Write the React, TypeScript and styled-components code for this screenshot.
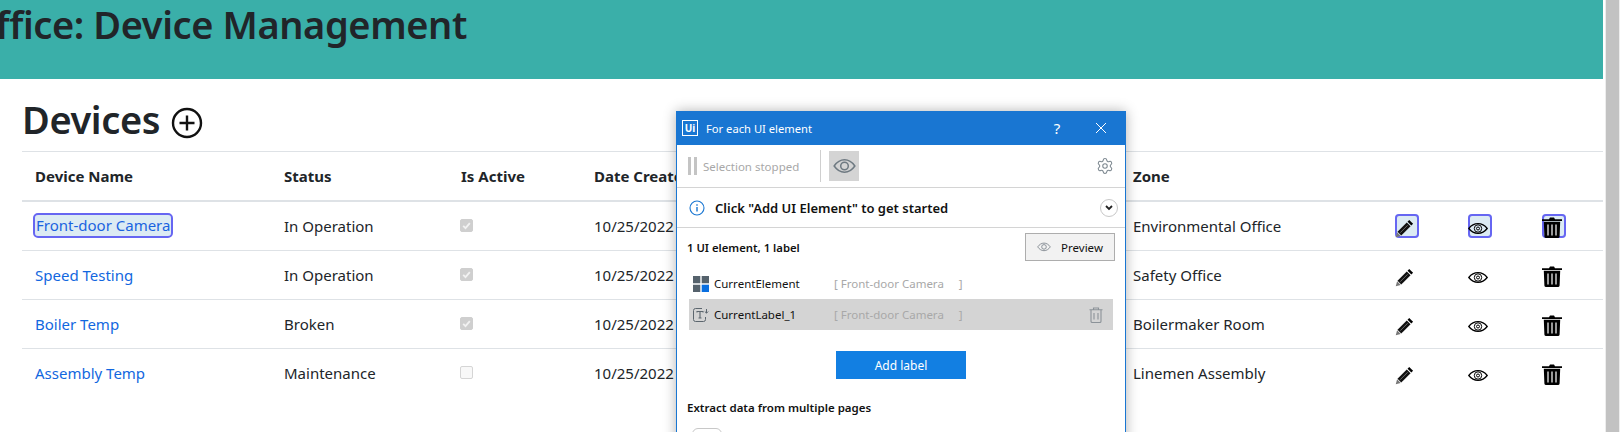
import React from "react"
import styled, { createGlobalStyle } from "styled-components"
import { Settings } from "lucide-react"

const GlobalStyle = createGlobalStyle`
  html, body {
    margin: 0;
    padding: 0;
    height: 432px;
    overflow: hidden;
    background: #fff;
    font-family: "Noto Sans", "Open Sans", sans-serif;
    color: #212529;
  }
`

type Device = {
  name: string
  status: string
  active: boolean
  zone: string
}

const devices: Device[] = [
  { name: "Front-door Camera", status: "In Operation", active: true, zone: "Environmental Office" },
  { name: "Speed Testing", status: "In Operation", active: true, zone: "Safety Office" },
  { name: "Boiler Temp", status: "Broken", active: true, zone: "Boilermaker Room" },
  { name: "Assembly Temp", status: "Maintenance", active: false, zone: "Linemen Assembly" },
]

const PencilIcon = () => (
  <svg width="19" height="19" viewBox="0 0 20 20">
    <path d="M15 1l4 4-1.800 1.800-4-4z" fill="#000" />
    <path d="M12.400 3.600l4 4-9.800 9.800-4-4z" fill="#111" />
    <path d="M13.300 6.600l-7.800 7.800" stroke="#888" strokeWidth="0.800" />
    <path d="M2.200 14l3.800 3.800L.8 19.300z" fill="#777" />
  </svg>
)

const EyeIcon = () => (
  <svg width="20" height="11" viewBox="0 0 20 11" fill="none" stroke="#000">
    <path d="M.8 5.500C3.300 2.300 6.300.7 10 .7s6.700 1.600 9.200 4.800C16.700 8.700 13.700 10.300 10 10.300S3.300 8.700.8 5.500z" strokeWidth="1.300" />
    <circle cx="10" cy="5.500" r="3.700" strokeWidth="1" />
    <circle cx="10" cy="5.500" r="1.500" strokeWidth="1" />
  </svg>
)

const TrashIcon = () => (
  <svg width="20" height="21" viewBox="0 0 20 21">
    <path d="M7 2.200L8 .4h4l1 1.800h7v1.800H0V2.200z" fill="#000" />
    <path d="M1.800 4.800h16.400l-.6 14.800a1.300 1.300 0 0 1-1.300 1.300H3.700a1.300 1.300 0 0 1-1.300-1.300z" fill="#000" />
    <path d="M6 7.500v11M10 7.500v11M14 7.500v11" stroke="#fff" strokeWidth="1.200" />
  </svg>
)

const PlusCircleIcon = () => (
  <svg width="32" height="32" viewBox="0 0 32 32" fill="none" stroke="#111">
    <circle cx="16" cy="16" r="14" strokeWidth="2.400" />
    <path d="M16 8.500v15M8.500 16h15" strokeWidth="2.400" />
  </svg>
)

const Header = styled.header`
  height: 79px;
  width: 1603px;
  background: #3aafa9;
  overflow: hidden;
`

const HeaderTitle = styled.h1`
  margin: 0 0 0 -34px;
  font-size: 38px;
  line-height: 48px;
  font-weight: 600;
  letter-spacing: -0.4px;
  white-space: nowrap;
`

const Page = styled.main`
  width: 1603px;
  padding-left: 22px;
  box-sizing: border-box;
`

const TitleRow = styled.div`
  display: flex;
  align-items: center;
  gap: 11px;
  height: 72px;
  padding-top: 8px;
  box-sizing: border-box;
`

const Title = styled.h2`
  margin: 0;
  font-size: 38px;
  line-height: 64px;
  font-weight: 600;
  letter-spacing: -0.4px;
`

const AddButton = styled.span`
  display: flex;
  margin-top: 8px;
`

const Table = styled.table`
  width: 1581px;
  border-collapse: collapse;
  table-layout: fixed;
  font-size: 15px;
`

const HeadCell = styled.th`
  padding: 0 12px;
  height: 48px;
  text-align: left;
  font-weight: 700;
  border-top: 1px solid #dee2e6;
  border-bottom: 2px solid #dee2e6;
  &:first-child {
    padding-left: 13px;
  }
`

const Row = styled.tr`
  height: 49px;
  border-bottom: 1px solid #dee2e6;
  &:last-child {
    border-bottom: 0;
  }
`

const Cell = styled.td`
  padding: 0 12px;
  white-space: nowrap;
  &:first-child {
    padding-left: 13px;
  }
`

const DeviceLink = styled.a<{ $focused?: boolean }>`
  color: #1267e0;
  text-decoration: none;
  border-radius: 3px;
  ${(p) =>
    p.$focused &&
    `
    display: inline-block;
    line-height: 21px;
    padding: 0 1px;
    color: #1a63e0;
    background: #dcebf3;
    outline: 2px solid #6666f2;
  `}
`

const ActiveBox = styled.span<{ $checked: boolean }>`
  display: block;
  width: 13px;
  height: 13px;
  margin-left: -1px;
  border-radius: 2px;
  box-sizing: border-box;
  background: ${(p) => (p.$checked ? "#cfcfcf" : "#f8f8f8")};
  border: 1px solid ${(p) => (p.$checked ? "#cfcfcf" : "#d5d5d5")};
  svg {
    display: block;
  }
`

const ActionButton = styled.span<{ $focused?: boolean; $pad?: number }>`
  display: flex;
  align-items: flex-end;
  justify-content: flex-start;
  width: 24px;
  height: 24px;
  box-sizing: border-box;
  border-radius: 4px;
  padding-bottom: ${(p) => p.$pad ?? 0}px;
  ${(p) =>
    p.$focused &&
    `
    background: #dcebf3;
    box-shadow: inset 0 0 0 2px #6666f2;
  `}
  svg {
    display: block;
    flex: none;
  }
`

const Dialog = styled.section`
  position: absolute;
  left: 676px;
  top: 111px;
  width: 450px;
  height: 400px;
  box-sizing: border-box;
  background: #fff;
  border: 1px solid #1976d2;
  border-top: 0;
  box-shadow: 0 0 12px rgba(0, 0, 0, 0.3);
  font-family: "Noto Sans", "Open Sans", sans-serif;
  color: #111;
`

const DialogTitleBar = styled.div`
  display: flex;
  align-items: center;
  height: 34px;
  background: #1976d2;
  color: #fff;
  font-size: 11.2px;
  padding-left: 5px;
`

const UiLogo = styled.span`
  display: flex;
  align-items: center;
  justify-content: center;
  width: 16px;
  height: 16px;
  box-sizing: border-box;
  border: 1.500px solid #fff;
  font-size: 10px;
  font-weight: 700;
  line-height: 1;
  margin-right: 8px;
`

const DialogTitle = styled.span`
  flex: 1;
`

const TitleHelp = styled.span`
  width: 46px;
  margin-right: -2px;
  text-align: center;
  font-size: 15px;
`

const TitleClose = styled.span`
  display: flex;
  justify-content: center;
  width: 46px;
  margin-right: 1px;
`

const DialogToolbar = styled.div`
  display: flex;
  align-items: center;
  height: 42px;
  padding: 0 11px;
  border-bottom: 1px solid #d4d4d4;
`

const PauseBars = styled.span`
  display: flex;
  gap: 3px;
  margin-right: 6px;
  i {
    display: block;
    width: 3px;
    height: 18px;
    background: #c4c4c4;
  }
`

const StoppedText = styled.span`
  width: 117px;
  font-size: 11.5px;
  color: #a8a8a8;
`

const ToolbarDivider = styled.span`
  width: 1px;
  height: 32px;
  background: #cfcfcf;
  margin-right: 8px;
`

const EyeToggle = styled.span`
  display: flex;
  align-items: center;
  justify-content: center;
  width: 30px;
  height: 30px;
  background: #d4d4d4;
`

const ToolbarSpacer = styled.span`
  flex: 1;
`

const InfoRow = styled.div`
  display: flex;
  align-items: center;
  height: 39px;
  padding: 0 7px 0 12px;
  border-bottom: 1px solid #d4d4d4;
  font-size: 13px;
  font-weight: 600;
`

const InfoText = styled.span`
  flex: 1;
  margin-left: 10px;
`

const Expander = styled.span`
  display: flex;
  align-items: center;
  justify-content: center;
  width: 18px;
  height: 18px;
  border-radius: 50%;
  border: 1px solid #c8c8c8;
  box-sizing: border-box;
`

const SummaryRow = styled.div`
  display: flex;
  align-items: center;
  justify-content: space-between;
  height: 38px;
  padding: 0 10px 0 10px;
  font-size: 11.3px;
  font-weight: 600;
`

const PreviewButton = styled.span`
  display: flex;
  align-items: center;
  justify-content: center;
  gap: 10px;
  width: 90px;
  height: 28px;
  box-sizing: border-box;
  background: #f2f2f2;
  border: 1px solid #adadad;
  font-size: 11.5px;
  font-weight: 400;
`

const ElementList = styled.div`
  padding: 2px 12px 0;
`

const ElementRow = styled.div<{ $selected?: boolean }>`
  display: flex;
  align-items: center;
  height: 31px;
  padding: 0 10px 0 4px;
  font-size: 11.5px;
  background: ${(p) => (p.$selected ? "#d4d4d4" : "transparent")};
`

const ElementName = styled.span`
  width: 120px;
  margin-left: 5px;
`

const ElementValue = styled.span`
  flex: 1;
  color: #a8a8a8;
  white-space: pre;
`

const AddLabel = styled.div`
  width: 130px;
  height: 28px;
  margin: 21px auto 0;
  display: flex;
  align-items: center;
  justify-content: center;
  background: #127fe2;
  color: #fff;
  font-size: 12px;
`

const SectionLabel = styled.div`
  margin: 21px 0 0 10px;
  font-size: 11.5px;
  font-weight: 600;
`

const ToggleStub = styled.div`
  width: 28px;
  height: 18px;
  margin: 13px 0 0 15px;
  border: 1px solid #c8c8c8;
  border-radius: 6px;
`

const ScrollTrack = styled.div`
  position: absolute;
  top: 0;
  right: 0;
  width: 15px;
  height: 432px;
  background: #ededed;
  display: flex;
  justify-content: center;
`

const ScrollThumb = styled.div`
  width: 13px;
  height: 432px;
  background: #c2c2c2;
`

const SmallEye = ({ size, color }: { size: number; color: string }) => (
  <svg width={size} height={size * 0.7} viewBox="0 0 20 14" fill="none" stroke={color} strokeWidth="1.300">
    <path d="M1 7c2.500-3.600 5.500-5.400 9-5.400s6.500 1.800 9 5.400c-2.500 3.600-5.500 5.400-9 5.400S3.500 10.600 1 7z" />
    <circle cx="10" cy="7" r="3.300" />
  </svg>
)

const App = () => {
  return (
    <>
      <GlobalStyle />
      <Header>
        <HeaderTitle>Office: Device Management</HeaderTitle>
      </Header>
      <Page>
        <TitleRow>
          <Title>Devices</Title>
          <AddButton>
            <PlusCircleIcon />
          </AddButton>
        </TitleRow>
        <Table>
          <colgroup>
            <col width="250" />
            <col width="177" />
            <col width="133" />
            <col width="539" />
            <col width="262" />
            <col width="73" />
            <col width="74" />
            <col width="73" />
          </colgroup>
          <thead>
            <tr>
              <HeadCell>Device Name</HeadCell>
              <HeadCell>Status</HeadCell>
              <HeadCell>Is Active</HeadCell>
              <HeadCell>Date Created</HeadCell>
              <HeadCell>Zone</HeadCell>
              <HeadCell />
              <HeadCell />
              <HeadCell />
            </tr>
          </thead>
          <tbody>
            {devices.map((device, i) => (
              <Row key={device.name}>
                <Cell>
                  <DeviceLink href="#" $focused={i === 0}>
                    {device.name}
                  </DeviceLink>
                </Cell>
                <Cell>{device.status}</Cell>
                <Cell>
                  <ActiveBox $checked={device.active}>
                    {device.active && (
                      <svg width="11" height="11" viewBox="0 0 11 11" fill="none">
                        <path d="M2.200 5.800l2.300 2.300 4.300-5" stroke="#f2f2f2" strokeWidth="1.800" />
                      </svg>
                    )}
                  </ActiveBox>
                </Cell>
                <Cell>10/25/2022</Cell>
                <Cell>{device.zone}</Cell>
                <Cell>
                  <ActionButton $focused={i === 0}>
                    <PencilIcon />
                  </ActionButton>
                </Cell>
                <Cell>
                  <ActionButton $focused={i === 0} $pad={4}>
                    <EyeIcon />
                  </ActionButton>
                </Cell>
                <Cell>
                  <ActionButton $focused={i === 0}>
                    <TrashIcon />
                  </ActionButton>
                </Cell>
              </Row>
            ))}
          </tbody>
        </Table>
      </Page>

      <Dialog>
        <DialogTitleBar>
          <UiLogo>Ui</UiLogo>
          <DialogTitle>For each UI element</DialogTitle>
          <TitleHelp>?</TitleHelp>
          <TitleClose>
            <svg width="12" height="12" viewBox="0 0 12 12" stroke="#fff" strokeWidth="1">
              <path d="M1 1l10 10M11 1L1 11" />
            </svg>
          </TitleClose>
        </DialogTitleBar>
        <DialogToolbar>
          <PauseBars>
            <i />
            <i />
          </PauseBars>
          <StoppedText>Selection stopped</StoppedText>
          <ToolbarDivider />
          <EyeToggle>
            <SmallEye size={23} color="#6f7a82" />
          </EyeToggle>
          <ToolbarSpacer />
          <Settings size={18} color="#7d8890" strokeWidth={1.4} />
        </DialogToolbar>
        <InfoRow>
          <svg width="16" height="16" viewBox="0 0 16 16" fill="none" stroke="#1976d2" strokeWidth="1.100">
            <circle cx="8" cy="8" r="7" />
            <path d="M8 7v4.500M8 4.300v1.400" strokeWidth="1.400" />
          </svg>
          <InfoText>Click "Add UI Element" to get started</InfoText>
          <Expander>
            <svg width="10" height="8" viewBox="0 0 10 8" fill="none" stroke="#222" strokeWidth="1.800">
              <path d="M2 2l3 3 3-3" />
            </svg>
          </Expander>
        </InfoRow>
        <SummaryRow>
          <span>1 UI element, 1 label</span>
          <PreviewButton>
            <SmallEye size={14} color="#808890" />
            <span>Preview</span>
          </PreviewButton>
        </SummaryRow>
        <ElementList>
          <ElementRow>
            <svg width="16" height="16" viewBox="0 0 16 16">
              <path d="M0 0h7.300v7.300H0zM8.700 0H16v7.300H8.700zM0 8.700h7.300V16H0z" fill="#55626c" />
              <path d="M8.700 8.700H16V16H8.700z" fill="#0a6fe0" />
            </svg>
            <ElementName>CurrentElement</ElementName>
            <ElementValue>[ Front-door Camera     ]</ElementValue>
          </ElementRow>
          <ElementRow $selected>
            <svg width="16" height="16" viewBox="0 0 16 16" fill="none" stroke="#5c666e" strokeWidth="1">
              <path d="M9 1.500H2.500a2 2 0 0 0-2 2v9a2 2 0 0 0 2 2h8a2 2 0 0 0 2-2V10" />
              <path d="M4 5.500V4.500h6v1M7 4.500v6.500M5.500 11h3" strokeWidth="1.100" />
              <path d="M13.500 2v4M11.800 4.500l1.700 1.700 1.700-1.700" />
            </svg>
            <ElementName>CurrentLabel_1</ElementName>
            <ElementValue>[ Front-door Camera     ]</ElementValue>
            <svg width="14" height="16" viewBox="0 0 14 16" fill="none" stroke="#8b9298" strokeWidth="1.100">
              <path d="M.5 2.800h13M4.500 2.800V1h5v1.800M2 2.800v11.400a1.300 1.300 0 0 0 1.300 1.300h7.400a1.300 1.300 0 0 0 1.300-1.300V2.800M5 6v6.500M9 6v6.500" />
            </svg>
          </ElementRow>
        </ElementList>
        <AddLabel>Add label</AddLabel>
        <SectionLabel>Extract data from multiple pages</SectionLabel>
        <ToggleStub />
      </Dialog>

      <ScrollTrack>
        <ScrollThumb />
      </ScrollTrack>
    </>
  )
}

export default App
